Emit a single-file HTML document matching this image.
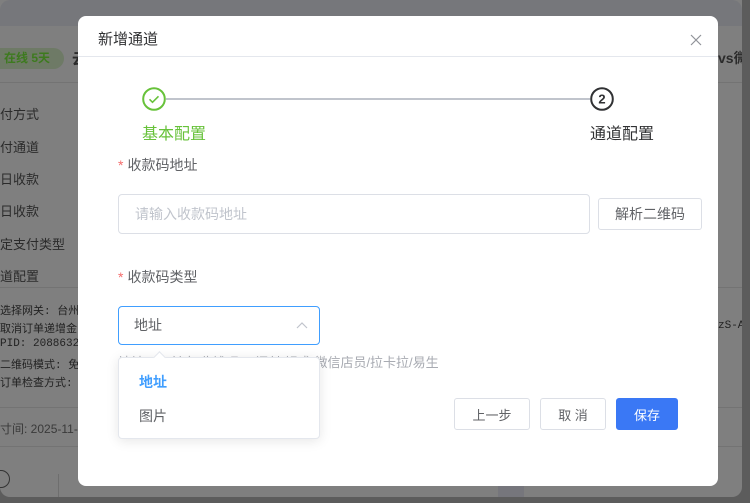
<!DOCTYPE html>
<html><head><meta charset="utf-8"><style>
*{box-sizing:border-box;margin:0;padding:0}
body{width:750px;height:503px;overflow:hidden;background:#555;font-family:"Liberation Sans","Noto Sans CJK SC",sans-serif;position:relative}
.page{position:absolute;left:0;top:0;width:750px;height:503px;background:#5c5c5c}
.card{position:absolute;left:0;top:0;width:742px;height:497px;background:#7f7f7f;border-radius:0 0 10px 10px;overflow:hidden}
.top{position:absolute;left:0;top:0;width:742px;height:26px;background:#76777b;border-radius:10px 10px 0 0}
.bt{position:absolute;color:#2b2b2b;font-size:13px;white-space:nowrap}
.mono{font-family:"Liberation Mono","Noto Sans CJK SC",monospace;font-size:11px;color:#222}
.hl{position:absolute;left:0;width:742px;height:1px;background:#737373}
.modal{position:absolute;left:78px;top:16px;width:640px;height:470px;background:#fff;border-radius:8px}
.abs{position:absolute;white-space:nowrap}
.lbl{font-size:14px;color:#606266}
.lbl b{color:#f56c6c;font-weight:normal;margin-right:4px}
.btn{position:absolute;border:1px solid #dcdfe6;border-radius:3px;background:#fff;font-size:13px;color:#606266;display:flex;align-items:center;justify-content:center}
</style></head><body>
<div class="page"><div class="card">
<div class="top"></div>
<div class="abs" style="left:-10px;top:48px;width:74px;height:21px;border-radius:11px;background:#6e7a66;color:#3d7a1e;font-size:12px;font-weight:bold;padding-left:14px;line-height:21px">在线 5天</div>
<div class="bt" style="left:72px;top:48px;font-weight:bold;font-size:15px">云</div>
<div class="bt" style="left:718px;top:48px;font-weight:bold;font-size:14px">vs微信</div>
<div class="hl" style="top:82px"></div>
<div class="bt" style="left:0;top:104px">付方式</div>
<div class="bt" style="left:0;top:137px">付通道</div>
<div class="bt" style="left:0;top:169px">日收款</div>
<div class="bt" style="left:0;top:201px">日收款</div>
<div class="bt" style="left:0;top:234px">定支付类型</div>
<div class="bt" style="left:0;top:266px">道配置</div>
<div class="hl" style="top:287px"></div>
<div class="bt mono" style="left:0;top:302px">选择网关: 台州</div>
<div class="bt mono" style="left:0;top:320px">取消订单递增金</div>
<div class="bt mono" style="left:0;top:338px">PID: 208863219</div>
<div class="bt mono" style="left:0;top:356px">二维码模式: 免</div>
<div class="bt mono" style="left:0;top:374px">订单检查方式:</div>
<div class="bt mono" style="left:718px;top:320px">zS-AGO</div>
<div class="hl" style="top:407px"></div>
<div class="bt" style="left:0;top:420px;color:#3a3a3a;font-size:12px">寸间: 2025-11-</div>
<div class="hl" style="top:446px"></div>
<div class="abs" style="left:-8px;top:470px;width:18px;height:18px;border:1.5px solid #333;border-radius:50%"></div>
<div class="abs" style="left:58px;top:474px;width:1px;height:30px;background:#6e6e6e"></div>
<div class="abs" style="left:498px;top:474px;width:26px;height:30px;background:#76767c"></div>
</div></div>

<div class="modal">
<div class="abs" style="left:20px;top:12px;font-size:15px;color:#303133">新增通道</div>
<svg class="abs" style="left:611px;top:17px" width="14" height="14"><path d="M2 2L12 12M12 2L2 12" stroke="#909399" stroke-width="1.2"/></svg>
<div class="abs" style="left:0;top:40px;width:640px;height:1px;background:#e4e7ed"></div>
<div class="abs" style="left:88px;top:82px;width:424px;height:2px;background:#c0c4cc"></div>
<svg class="abs" style="left:64px;top:71px" width="24" height="24"><circle cx="12" cy="12" r="10.8" fill="#fff" stroke="#67c23a" stroke-width="2"/><path d="M7.5 12.3l3 3 6-6" fill="none" stroke="#67c23a" stroke-width="1.6"/></svg>
<svg class="abs" style="left:512px;top:71px" width="24" height="24"><circle cx="12" cy="12" r="10.8" fill="#fff" stroke="#303133" stroke-width="2"/><text x="12" y="16.5" text-anchor="middle" font-size="13" font-weight="bold" fill="#303133" font-family="Liberation Sans">2</text></svg>
<div class="abs" style="left:64px;top:104px;font-size:16px;color:#67c23a">基本配置</div>
<div class="abs" style="left:512px;top:104px;font-size:16px;color:#303133">通道配置</div>
<div class="abs lbl" style="left:40px;top:139px"><b>*</b>收款码地址</div>
<div class="abs" style="left:40px;top:178px;width:472px;height:40px;border:1px solid #dcdfe6;border-radius:4px;font-size:14px;color:#c0c4cc;padding-left:16px;line-height:38px">请输入收款码地址</div>
<div class="btn" style="left:520px;top:182px;width:104px;height:32px;font-size:14px">解析二维码</div>
<div class="abs lbl" style="left:40px;top:251px"><b>*</b>收款码类型</div>
<div class="abs" style="left:40px;top:290px;width:202px;height:39px;border:1px solid #409eff;border-radius:4px;font-size:14px;color:#606266;padding-left:15px;line-height:37px">地址</div>
<svg class="abs" style="left:218px;top:305px" width="12" height="8"><path d="M1 7L6 2L11 7" fill="none" stroke="#c0c4cc" stroke-width="1.2"/></svg>
<div class="abs" style="left:40px;top:336px;font-size:13px;color:#a8abb2">地址：支付宝/收钱吧/云闪付/银盛/微信店员/拉卡拉/易生</div>
<div class="abs" style="left:40px;top:341px;width:202px;height:82px;background:#fff;border:1px solid #e4e7ed;border-radius:4px;box-shadow:0 2px 12px rgba(0,0,0,.1)"></div>
<div class="abs" style="left:77px;top:337px;width:9px;height:9px;background:#fff;border-left:1px solid #e4e7ed;border-top:1px solid #e4e7ed;transform:rotate(45deg)"></div>
<div class="abs" style="left:61px;top:356px;font-size:14px;color:#409eff;font-weight:bold">地址</div>
<div class="abs" style="left:61px;top:390px;font-size:14px;color:#606266">图片</div>
<div class="btn" style="left:376px;top:382px;width:76px;height:32px">上一步</div>
<div class="btn" style="left:462px;top:382px;width:66px;height:32px">取 消</div>
<div class="btn" style="left:538px;top:382px;width:62px;height:32px;background:#3a78f5;border-color:#3a78f5;color:#fff">保存</div>
</div>
</body></html>
